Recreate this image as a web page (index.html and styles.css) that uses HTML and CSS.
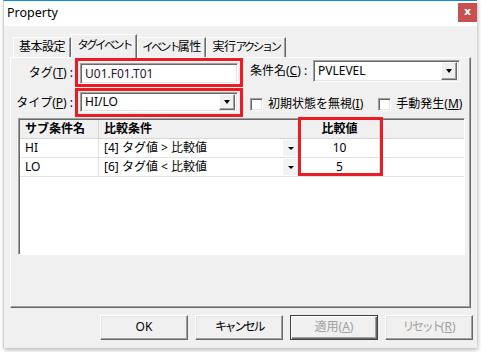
FILE: index.html
```html
<!DOCTYPE html>
<html lang="ja">
<head>
<meta charset="utf-8">
<title>Property</title>
<link rel="stylesheet" href="styles.css">
</head>
<body>
<div class="window">
  <div class="titlebar">
    <span class="title">Property</span>
    <div class="close">x</div>
  </div>
  <div class="client">
    <div class="tabs">
      <div class="tab t1">基本設定</div>
      <div class="tab t2 active"><span class="k">タグイベント</span></div>
      <div class="tab t3"><span class="k">イベント</span>属性</div>
      <div class="tab t4">実行<span class="k">アクション</span></div>
    </div>
    <div class="page">
      <div class="top">
        <div class="leftcol">
          <div class="frow">
            <label class="lbl">タグ(<u>T</u>) :</label>
            <div class="hl hl1"><div class="edit">U01.F01.T01</div></div>
          </div>
          <div class="frow second">
            <label class="lbl">タイプ(<u>P</u>) :</label>
            <div class="hl hl2"><div class="combo wide"><span class="ctext">HI/LO</span><span class="dropbtn"><span class="arrow"></span></span></div></div>
          </div>
        </div>
        <div class="rightcol">
          <div class="crow">
            <label class="clbl">条件名(<u>C</u>) :</label>
            <div class="combo cond"><span class="ctext">PVLEVEL</span><span class="dropbtn"><span class="arrow"></span></span></div>
          </div>
          <div class="checks">
            <span class="cbox"></span><span class="clabel">初期状態を無視(<u>I</u>)</span>
            <span class="cbox cb2"></span><span class="clabel">手動発生(<u>M</u>)</span>
          </div>
        </div>
      </div>
      <div class="list">
        <div class="lrow head">
          <div class="c c1">サブ条件名</div>
          <div class="c c2">比較条件</div>
          <div class="c c3">比較値</div>
          <div class="c c4"></div>
        </div>
        <div class="lrow">
          <div class="c c1">HI</div>
          <div class="c c2">[4] タグ値 &gt; 比較値<span class="mini"><span class="arrow"></span></span></div>
          <div class="c c3">10</div>
          <div class="c c4"></div>
        </div>
        <div class="lrow">
          <div class="c c1">LO</div>
          <div class="c c2">[6] タグ値 &lt; 比較値<span class="mini"><span class="arrow"></span></span></div>
          <div class="c c3">5</div>
          <div class="c c4"></div>
        </div>
        <div class="mark"></div>
      </div>
    </div>
    <div class="buttons">
      <div class="btn">OK</div>
      <div class="btn"><span class="k">キャンセル</span></div>
      <div class="btn def dis">適用(<u>A</u>)</div>
      <div class="btn dis"><span class="k">リセット</span>(<u>R</u>)</div>
    </div>
  </div>
</div>
</body>
</html>
```
FILE: styles.css
```css
html, body {
  margin: 0;
  padding: 0;
}
body {
  width: 481px;
  height: 352px;
  overflow: hidden;
  background: #ffffff;
  font-family: "Noto Sans", "Noto Sans CJK JP", sans-serif;
  font-size: 12px;
  color: #000;
}
u { text-decoration: underline; text-underline-offset: 1px; }

.window {
  margin-left: 3px;
  width: 474px;
  height: 348px;
  box-sizing: border-box;
  border-top: 1px solid #1a84d8;
  border-left: 1px solid #d4d4d4;
  background: #f0f0f0;
  box-shadow: 1px 2px 4px rgba(0,0,0,0.28);
  display: flex;
  flex-direction: column;
}

.titlebar {
  height: 25px;
  background: #ffffff;
  display: flex;
  align-items: flex-start;
  flex-shrink: 0;
}
.title {
  margin-left: 3px;
  margin-top: 4px;
  line-height: 16px;
  font-size: 12.5px;
}
.close {
  margin-left: auto;
  margin-top: 2px;
  width: 19px;
  height: 19px;
  background: #c75050;
  color: #fff;
  font-weight: bold;
  font-size: 11px;
  line-height: 17px;
  text-align: center;
  font-family: "DejaVu Sans", sans-serif;
}

.client {
  flex: 1;
  display: flex;
  flex-direction: column;
}

.tabs {
  display: flex;
  align-items: flex-end;
  margin-top: 8px;
  margin-left: 9px;
  height: 23px;
  position: relative;
  z-index: 1;
}
.tab {
  box-sizing: border-box;
  height: 20px;
  border-top: 1px solid #ffffff;
  border-left: 1px solid #ffffff;
  border-right: 1px solid #696969;
  box-shadow: inset -1px 0 0 #a0a0a0;
  background: #f0f0f0;
  text-align: center;
  line-height: 18px;
  white-space: nowrap;
  font-size: 12px;
  letter-spacing: -0.5px;
}
.k {
  letter-spacing: -2.6px;
  font-size: 11.5px;
}
.t1 { width: 58px; }
.t2 { width: 66px; }
.t3 { width: 69px; }
.t4 { width: 80px; }
.tab.active {
  height: 24px;
  margin-bottom: -1px;
  line-height: 20px;
}

.page {
  margin-left: 6px;
  width: 461px;
  height: 251px;
  box-sizing: border-box;
  border: 1px solid;
  border-color: #ffffff #696969 #696969 #ffffff;
  box-shadow: inset -1px -1px 0 #a0a0a0;
  background: #f0f0f0;
  flex-shrink: 0;
}

.top {
  display: flex;
}
.leftcol {
  display: flex;
  flex-direction: column;
}
.frow {
  display: flex;
  align-items: center;
}
.frow.second { margin-top: 1px; }
.lbl {
  width: 62px;
  padding-right: 2px;
  text-align: right;
  line-height: 16px;
  white-space: nowrap;
}
.hl {
  box-sizing: border-box;
  width: 168px;
  height: 29px;
  border: 3px solid #ec1c24;
}
.hl1 { padding: 2px 2px 0 2px; }
.hl2 { padding: 1px 2px 0 2px; }

.edit {
  box-sizing: border-box;
  height: 21px;
  background: #fff;
  border: 1px solid;
  border-color: #a0a0a0 #ffffff #ffffff #a0a0a0;
  box-shadow: inset 1px 1px 0 #696969, inset -1px -1px 0 #e3e3e3;
  padding-left: 4px;
  line-height: 19px;
  color: #2a1030;
}

.combo {
  box-sizing: border-box;
  height: 20px;
  background: #fff;
  border: 1px solid;
  border-color: #a0a0a0 #ffffff #ffffff #a0a0a0;
  box-shadow: inset 1px 1px 0 #696969, inset -1px -1px 0 #e3e3e3;
  display: flex;
  align-items: center;
  padding: 0 2px 0 4px;
}
.ctext { flex: 1; line-height: 16px; }
.dropbtn {
  box-sizing: border-box;
  width: 16px;
  height: 16px;
  background: #f0f0f0;
  border: 1px solid;
  border-color: #ffffff #696969 #696969 #ffffff;
  box-shadow: inset -1px -1px 0 #a0a0a0;
  display: flex;
  align-items: center;
  justify-content: center;
}
.arrow {
  width: 0;
  height: 0;
  border-left: 3.5px solid transparent;
  border-right: 3.5px solid transparent;
  border-top: 4px solid #000;
}

.rightcol {
  margin-left: 7px;
  display: flex;
  flex-direction: column;
}
.crow {
  display: flex;
  align-items: center;
  margin-top: 2px;
}
.clbl { white-space: nowrap; line-height: 16px; width: 63px; }
.combo.cond {
  width: 147px;
  height: 22px;
}
.combo.cond .dropbtn { height: 18px; }

.checks {
  display: flex;
  align-items: center;
  margin-top: 15px;
  height: 14px;
}
.cbox {
  box-sizing: border-box;
  width: 13px;
  height: 13px;
  background: #fff;
  border: 1px solid;
  border-color: #a0a0a0 #ffffff #ffffff #a0a0a0;
  box-shadow: inset 1px 1px 0 #696969, inset -1px -1px 0 #e3e3e3;
}
.cbox.cb2 { margin-left: 15px; }
.clabel { margin-left: 5px; line-height: 16px; white-space: nowrap; }

.list {
  position: relative;
  margin-left: 7px;
  margin-top: 1px;
  width: 447px;
  height: 137px;
  box-sizing: border-box;
  border: 1px solid;
  border-color: #a0a0a0 #ffffff #ffffff #a0a0a0;
  box-shadow: inset 1px 1px 0 #696969;
  background: #ffffff;
  padding: 1px 0 0 1px;
}
.lrow {
  display: grid;
  grid-template-columns: 79px 201px 80px 1fr;
  height: 18px;
  border-bottom: 1px solid #e3e3e3;
}
.lrow.head {
  background: #f0f0f0;
  font-weight: bold;
  border-bottom: 1px solid #d5d5d5;
}
.c {
  line-height: 18px;
  padding-left: 5px;
  white-space: nowrap;
  border-right: 1px solid #e3e3e3;
  position: relative;
}
.head .c { border-right: 1px solid #d5d5d5; }
.c.c3 { text-align: center; padding-left: 0; }
.c.c4 { border-right: none; }
.mini {
  position: absolute;
  right: 1px;
  top: 1px;
  width: 15px;
  height: 16px;
  background: #f3f3f3;
  display: flex;
  align-items: center;
  justify-content: center;
}
.mini .arrow {
  border-left-width: 3px;
  border-right-width: 3px;
  border-top-width: 3px;
}
.mark {
  position: absolute;
  left: 279px;
  top: -2px;
  width: 85px;
  height: 59px;
  box-sizing: border-box;
  border: 3px solid #ec1c24;
}

.buttons {
  display: flex;
  gap: 7px;
  margin-top: 7px;
  margin-left: 96px;
}
.btn {
  box-sizing: border-box;
  width: 88px;
  height: 25px;
  background: #f0f0f0;
  border: 1px solid;
  border-color: #ffffff #696969 #696969 #ffffff;
  box-shadow: inset -1px -1px 0 #a0a0a0, inset 1px 1px 0 #e3e3e3;
  text-align: center;
  line-height: 22px;
}
.btn .k { font-size: 12px; letter-spacing: -2.4px; }
.btn.def {
  border: 1px solid #404040;
  box-shadow: inset 1px 1px 0 #ffffff, inset -1px -1px 0 #696969, inset -2px -2px 0 #a0a0a0;
}
.btn.dis { color: #a0a0a0; }
```
